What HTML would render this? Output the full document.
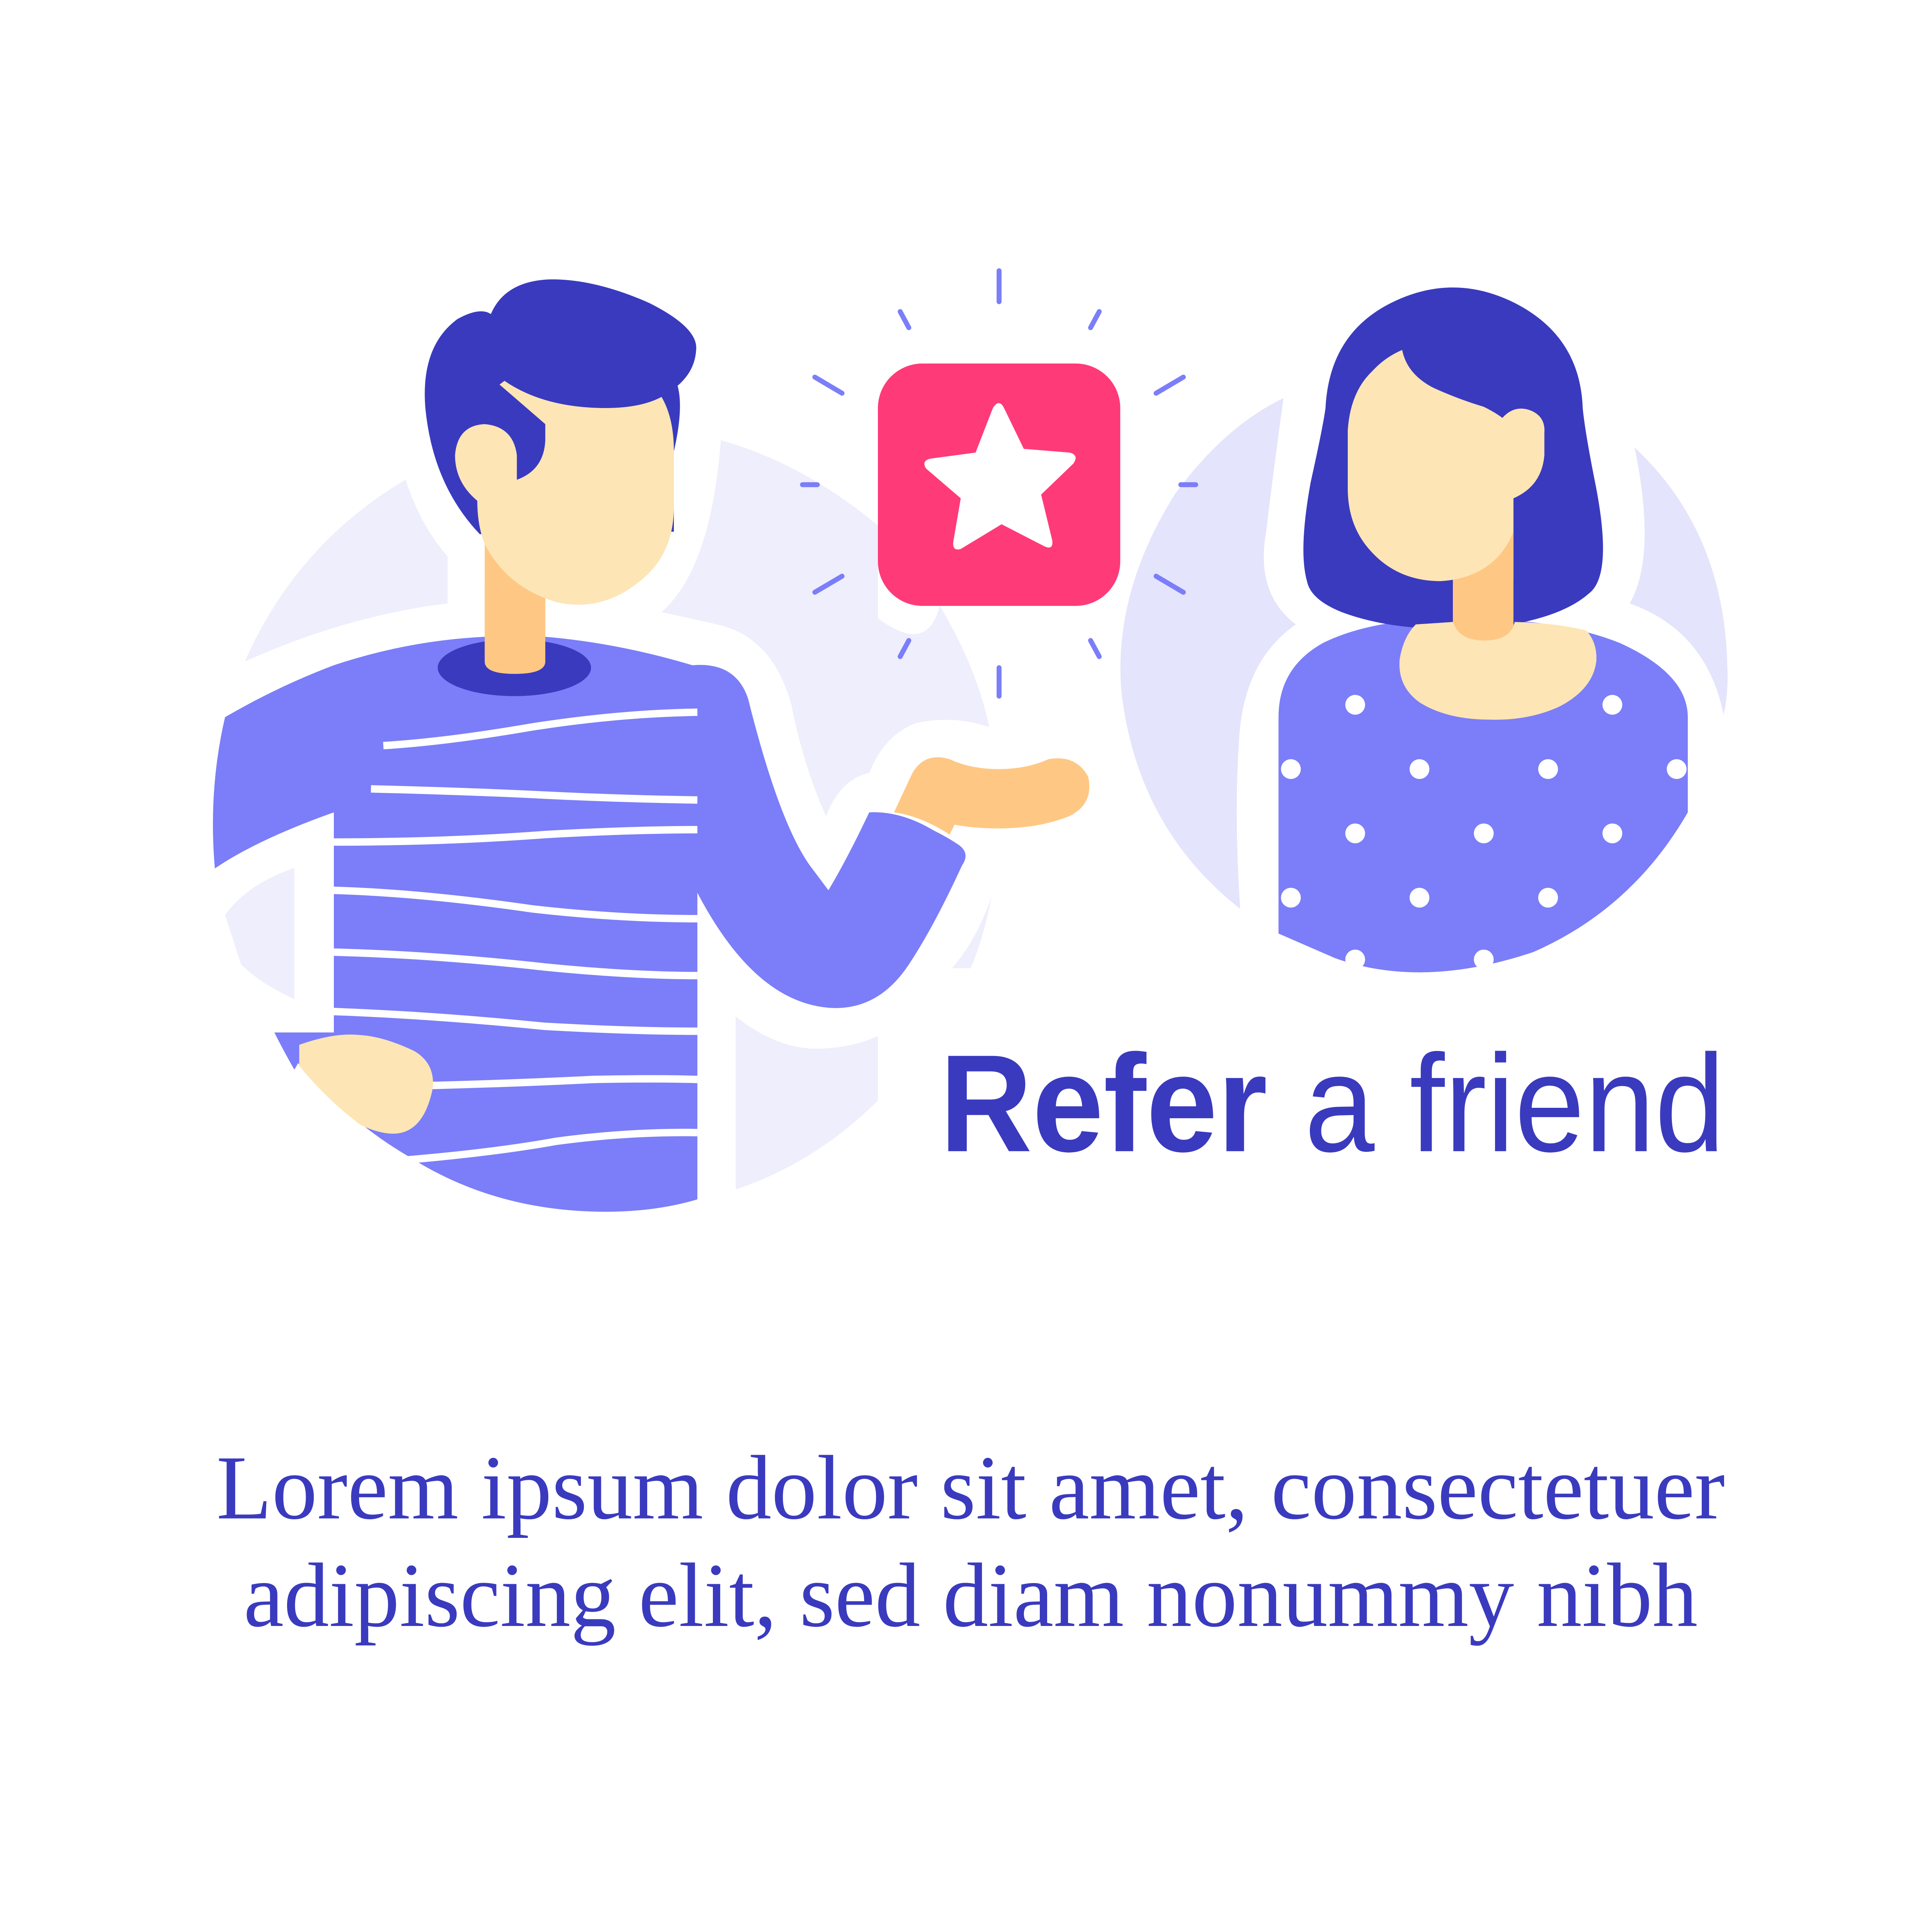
<!DOCTYPE html>
<html><head><style>html,body{margin:0;padding:0;background:#fff;width:5120px;height:5120px;overflow:hidden}svg{display:block}</style></head>
<body>
<svg width="5120" height="5120" viewBox="0 0 1600 1600" xmlns="http://www.w3.org/2000/svg">
<rect width="1600" height="1600" fill="#fff"/>
<path d="M198 535 Q240 440 328 388 Q340 425 362 450 L362 488 Q280 498 198 535Z" fill="#eeeefc"/>
<path d="M583 356 Q650 375 710 425 L710 500 Q750 530 760 490 Q790 540 800 588 Q770 578 740 585 Q715 595 703 625 Q680 630 668 660 Q650 620 640 570 Q625 515 580 505 L535 495 Q575 460 583 356Z" fill="#eeeefc"/>
<path d="M595 822 Q630 850 665 848 Q690 847 710 838 L710 890 Q660 940 595 962Z" fill="#eeeefc"/>
<path d="M770 783 Q790 760 802 725 Q795 760 785 783Z" fill="#eeeefc"/>
<path d="M1038 322 Q1030 380 1024 430 Q1015 480 1048 505 Q1005 535 1002 600 Q998 660 1003 735 Q920 670 907 560 Q900 480 950 400 Q990 345 1038 322Z" fill="#e4e4fc"/>
<path d="M1322 362 Q1395 430 1397 540 Q1398 560 1394 578 Q1380 510 1318 488 Q1340 450 1322 362Z" fill="#e4e4fc"/>
<g stroke="#7b7ef8" stroke-width="4" stroke-linecap="round">
<line x1="808" y1="219" x2="808" y2="244"/><line x1="808" y1="540" x2="808" y2="563"/>
<line x1="728" y1="252" x2="735" y2="265"/><line x1="889" y1="252" x2="882" y2="265"/>
<line x1="728" y1="531" x2="735" y2="518"/><line x1="889" y1="531" x2="882" y2="518"/>
<line x1="659" y1="305" x2="681" y2="318"/><line x1="957" y1="305" x2="935" y2="318"/>
<line x1="659" y1="479" x2="681" y2="466"/><line x1="957" y1="479" x2="935" y2="466"/>
<line x1="649" y1="392" x2="661" y2="392"/><line x1="955" y1="392" x2="967" y2="392"/>
</g>
<rect x="710" y="294" width="196" height="196" rx="36" fill="#ff3a78"/>
<path d="M803 330 Q808 322 812 330 L828 363 L865 366 Q873 368 868 375 L842 400 L851 437 Q852 445 845 442 L810 424 L777 444 Q770 446 771 438 L777 403 L749 379 Q745 373 752 371 L789 366Z" fill="#fff"/>
<path d="M392 440 L441 440 L441 540 L392 540Z" fill="#fec884"/>
<path d="M182 580 Q225 555 270 538 Q330 518 392 515 L441 515 Q500 520 560 538 Q595 535 605 565 Q630 665 655 700 L670 720 Q685 695 703 657 Q740 655 780 690 Q755 750 735 780 Q710 818 670 815 Q610 810 564 722 L564 970 Q530 980 490 980 Q400 980 330 935 Q270 900 222 835 L242 845 Q245 855 238 865 Q195 790 174 705 Q168 640 182 580Z" fill="#7b7ef8"/>
<g fill="none" stroke="#fff" stroke-width="6">
<path d="M310 603 Q360 600 430 588 Q500 577 564 576"/>
<path d="M300 638 Q380 640 440 643 Q500 646 564 647"/>
<path d="M268 681 Q360 681 440 675 Q510 671 564 671"/>
<path d="M268 720 Q340 722 430 735 Q500 743 564 743"/>
<path d="M268 770 Q350 772 440 782 Q510 789 564 789"/>
<path d="M268 818 Q350 821 440 830 Q510 834 564 834"/>
<path d="M345 878 Q420 876 480 873 Q530 872 564 873"/>
<path d="M330 938 Q400 932 450 923 Q510 915 564 916"/>
</g>
<path d="M170 705 Q205 680 270 657 L270 835 L222 835 L165 835Z" fill="#fff"/>
<path d="M182 740 Q200 715 238 702 L238 808 Q210 795 195 780Z" fill="#eeeefc"/>
<path d="M222 835 L242 845 Q245 855 243 862 Q230 848 222 835Z" fill="#7b7ef8"/>
<ellipse cx="416" cy="540" rx="62" ry="23" fill="#3a3abf"/>
<path d="M392 470 L441 470 L441 535 Q441 545 416 545 Q392 545 392 535Z" fill="#fec884"/>
<path d="M242 845 Q270 835 290 837 Q310 838 335 850 Q352 860 350 880 Q345 905 332 913 Q318 922 292 910 Q265 890 242 862Z" fill="#fde5b6"/>
<path d="M723 657 L738 625 Q748 608 768 614 Q785 622 808 622 Q830 622 848 614 Q870 610 880 628 Q885 650 865 660 Q840 670 808 670 Q788 670 772 667 L768 675Q745 660 723 657Z" fill="#fec884"/>
<path d="M703 657 Q740 660 775 683 Q785 690 778 700 Q755 750 735 780 Q710 818 670 815 L670 720 Q685 695 703 657Z" fill="#7b7ef8"/>
<path d="M388 432 Q350 392 344 330 Q340 280 370 258 Q388 248 397 254 Q408 228 443 226 Q480 225 525 245 Q565 265 563 283 Q562 300 548 312 Q553 330 545 365 L545 430Z" fill="#3a3abf"/>
<path d="M408 308 Q440 330 490 330 Q518 330 535 321 Q545 338 545 365 L545 410 Q545 450 515 472 Q485 495 450 487 Q410 475 392 440 Q386 425 386 405 Q368 390 368 368 Q370 344 392 343 Q415 345 418 368 L418 388 Q440 380 441 356 L441 343 L404 311Z" fill="#fde5b6"/>
<path d="M1034 580 Q1034 540 1070 520 Q1110 500 1180 500 Q1260 500 1310 520 Q1365 545 1365 580 L1365 657 Q1320 735 1240 770 Q1150 800 1080 775 L1034 755Z" fill="#7b7ef8"/>
<path d="M1072 330 Q1075 270 1125 245 Q1175 220 1225 245 Q1278 272 1280 330 Q1282 350 1290 390 Q1305 465 1285 480 Q1260 502 1200 508 Q1130 512 1085 495 Q1060 485 1057 470 Q1050 445 1060 390 Q1070 345 1072 330Z" fill="#3a3abf"/>
<path d="M1175 440 L1224 440 L1224 510 Q1224 518 1200 518 Q1175 518 1175 510Z" fill="#fec884"/>
<path d="M1145 505 L1175 503 Q1180 518 1200 518 Q1222 518 1225 503 Q1260 504 1283 510 Q1292 520 1291 535 Q1288 558 1260 572 Q1235 583 1205 582 Q1170 582 1148 568 Q1130 555 1132 533 Q1135 515 1145 505Z" fill="#fde5b6"/>
<path d="M1134 283 Q1138 303 1160 314 Q1180 323 1200 329 Q1210 334 1215 338 Q1225 327 1238 332 Q1250 337 1249 350 L1249 368 Q1247 393 1224 403 L1224 440 Q1200 468 1165 470 Q1130 470 1108 445 Q1090 425 1090 395 L1090 348 Q1092 317 1110 300 Q1120 289 1134 283Z" fill="#fde5b6"/>
<path d="M1224 440 L1224 430 Q1212 460 1180 468 L1224 468Z" fill="#fec884"/>
<g fill="#fff">
<circle cx="1096" cy="570" r="8"/><circle cx="1304" cy="570" r="8"/>
<circle cx="1044" cy="622" r="8"/><circle cx="1148" cy="622" r="8"/><circle cx="1252" cy="622" r="8"/><circle cx="1356" cy="622" r="8"/>
<circle cx="1096" cy="674" r="8"/><circle cx="1200" cy="674" r="8"/><circle cx="1304" cy="674" r="8"/>
<circle cx="1044" cy="726" r="8"/><circle cx="1148" cy="726" r="8"/><circle cx="1252" cy="726" r="8"/>
<circle cx="1096" cy="776" r="8"/><circle cx="1200" cy="776" r="8"/>
</g>
<g font-family="Liberation Sans, sans-serif" font-size="112" fill="#3a3abf">
<text x="760" y="931" font-weight="bold" textLength="265" lengthAdjust="spacingAndGlyphs">Refer</text>
<text x="1055" y="931" textLength="340" lengthAdjust="spacingAndGlyphs">a friend</text>
</g>
<g font-family="Liberation Serif, serif" font-size="74" fill="#3a3abf">
<text x="175" y="1228" textLength="1220" lengthAdjust="spacingAndGlyphs">Lorem ipsum dolor sit amet, consectetuer</text>
<text x="197" y="1315" textLength="1176" lengthAdjust="spacingAndGlyphs">adipiscing elit, sed diam nonummy nibh</text>
</g>
</svg>
</body></html>
